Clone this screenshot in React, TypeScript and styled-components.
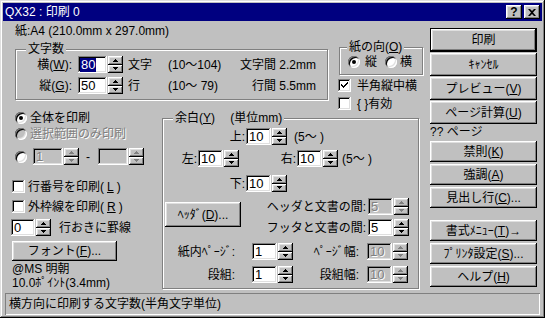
import React from "react";
import styled, { createGlobalStyle, css } from "styled-components";

const GlobalStyle = createGlobalStyle`
  * { box-sizing: border-box; }
  html, body { margin: 0; padding: 0; background: #c0c0c0; }
  body {
    font-family: "Liberation Sans", "Noto Sans CJK JP", sans-serif;
    font-size: 12px;
    line-height: 14px;
    color: #000;
  }
`;

const raised = css`
  background: #c0c0c0;
  box-shadow: inset -1px -1px #000, inset 1px 1px #fff, inset -2px -2px #808080,
    inset 2px 2px #dfdfdf;
`;

const sunken = css`
  box-shadow: inset -1px -1px #fff, inset 1px 1px #808080, inset -2px -2px #dfdfdf,
    inset 2px 2px #000;
`;

const Window = styled.div`
  width: 545px;
  height: 318px;
  padding: 3px;
  background: #c0c0c0;
  box-shadow: inset -1px -1px #000, inset 1px 1px #dfdfdf, inset -2px -2px #808080,
    inset 2px 2px #fff;
  display: flex;
  flex-direction: column;
  overflow: hidden;
`;

const TitleBar = styled.div`
  flex: none;
  height: 18px;
  padding: 0 2px;
  background: #000080;
  color: #fff;
  display: flex;
  align-items: center;
  justify-content: space-between;
`;

const CaptionButtons = styled.div`
  display: flex;
  gap: 2px;
`;

const CaptionButton = styled.span`
  ${raised}
  width: 16px;
  height: 14px;
  display: flex;
  align-items: center;
  justify-content: center;
  color: #000;
  font-weight: bold;
  font-size: 12px;
  line-height: 12px;
`;

const Main = styled.div`
  flex: 1;
  min-height: 0;
  display: flex;
`;

const Form = styled.div`
  width: 427px;
  display: flex;
  flex-direction: column;
`;

const TopArea = styled.div`
  flex: none;
  height: 90px;
  display: flex;
`;

const TopLeft = styled.div`
  width: 325px;
  padding: 3px 0 0 12px;
`;

const TopRight = styled.div`
  margin-left: 10px;
  padding-top: 19px;
`;

const BottomArea = styled.div`
  flex: 1;
  display: flex;
`;

const LeftOptions = styled.div`
  width: 159px;
  padding-left: 9px;
  display: flex;
  flex-direction: column;
`;

const Group = styled.fieldset<{ $w: number; $h: number }>`
  flex: none;
  margin: 0;
  padding: 0;
  min-inline-size: 0;
  width: ${(p) => p.$w}px;
  height: ${(p) => p.$h}px;
  border: 1px solid #808080;
  box-shadow: inset 1px 1px #fff, 1px 1px #fff;
`;

const CountGroup = styled(Group)`
  margin-top: 4px;
`;

const OrientGroup = styled(Group)`
  margin-left: 1px;
`;

const GroupTitle = styled.legend<{ $ml: number }>`
  margin-left: ${(p) => p.$ml}px;
  padding: 0 2px;
  height: 14px;
  line-height: 14px;
  background: #c0c0c0;
  white-space: pre;
`;

const CountGrid = styled.div`
  display: grid;
  grid-template-columns: 62px 45px 45px 69px 79px;
  grid-auto-rows: 17px;
  row-gap: 4px;
  align-items: center;
`;

const Label = styled.span<{ $w: number; $pr?: number }>`
  flex: none;
  width: ${(p) => p.$w}px;
  padding-right: ${(p) => p.$pr ?? 0}px;
  text-align: right;
  white-space: nowrap;
`;

const Unit = styled.span`
  padding-left: 5px;
`;

const Spacing = styled.span`
  text-align: right;
  white-space: nowrap;
`;

const Key = styled.span`
  text-decoration: underline;
`;

const Row = styled.div<{ $mt?: number; $pl?: number; $h?: number }>`
  display: flex;
  align-items: center;
  flex: none;
  height: ${(p) => p.$h ?? 17}px;
  margin-top: ${(p) => p.$mt ?? 0}px;
  padding-left: ${(p) => p.$pl ?? 0}px;
  white-space: nowrap;
`;

const Option = styled.span<{ $gap: number; $ml?: number }>`
  display: inline-flex;
  align-items: center;
  gap: ${(p) => p.$gap}px;
  margin-left: ${(p) => p.$ml ?? 0}px;
`;

const Note = styled.span<{ $ml: number }>`
  margin-left: ${(p) => p.$ml}px;
`;

const Disabled = styled.span`
  color: #808080;
  text-shadow: 1px 1px #fff;
`;

const RadioMark = styled.span<{ $checked?: boolean; $disabled?: boolean }>`
  flex: none;
  width: 12px;
  height: 12px;
  border-radius: 50%;
  background: ${(p) => (p.$disabled ? "#c0c0c0" : "#fff")};
  box-shadow: inset 1px 1px #808080, inset -1px -1px #fff, inset 2px 2px #000,
    inset -2px -2px #dfdfdf;
  display: flex;
  align-items: center;
  justify-content: center;
  &::after {
    content: "";
    width: 4px;
    height: 4px;
    border-radius: 50%;
    background: ${(p) => (p.$checked ? "#000" : "transparent")};
  }
`;

const CheckMark = styled.span`
  flex: none;
  width: 13px;
  height: 13px;
  background: #fff;
  ${sunken}
  display: flex;
  align-items: center;
  justify-content: center;
`;

const Field = styled.span<{ $w: number; $disabled?: boolean }>`
  flex: none;
  width: ${(p) => p.$w}px;
  height: 17px;
  padding-left: 3px;
  background: ${(p) => (p.$disabled ? "#c0c0c0" : "#fff")};
  color: ${(p) => (p.$disabled ? "#808080" : "#000")};
  text-shadow: ${(p) => (p.$disabled ? "1px 1px #fff" : "none")};
  ${sunken}
  display: flex;
  align-items: center;
  font-size: 13px;
`;

const Selection = styled.span`
  margin-left: -1px;
  padding: 0 1px;
  line-height: 14px;
  background: #000080;
  color: #fff;
`;

const SpinWrap = styled.span<{ $ml?: number }>`
  flex: none;
  display: inline-flex;
  gap: 1px;
  margin-left: ${(p) => p.$ml ?? 0}px;
`;

const Spinner = styled.span`
  flex: none;
  width: 15px;
  height: 17px;
  display: flex;
  flex-direction: column;
`;

const SpinHalf = styled.span`
  ${raised}
  flex: 1;
  display: flex;
  align-items: center;
  justify-content: center;
`;

const Dash = styled.span`
  margin: 0 8px 0 7px;
`;

const PushButton = styled.button<{ $h: number; $w?: number; $default?: boolean }>`
  flex: none;
  ${raised}
  border: 0;
  padding: 0;
  font: inherit;
  color: #000;
  width: ${(p) => (p.$w ? `${p.$w}px` : "100%")};
  height: ${(p) => p.$h}px;
  display: flex;
  align-items: center;
  justify-content: center;
  white-space: nowrap;
  ${(p) =>
    p.$default &&
    css`
      box-shadow: inset 0 0 0 1px #000, inset -2px -2px #000, inset 2px 2px #fff,
        inset -3px -3px #808080, inset 3px 3px #dfdfdf;
    `}
`;

const HeaderButton = styled(PushButton)`
  margin: 4px 0 0 2px;
`;

const FontButton = styled(PushButton)`
  margin-top: 5px;
`;

const FontInfo = styled.div`
  margin-top: 1px;
  white-space: nowrap;
`;

const HeaderRow = styled.div`
  display: flex;
  margin-top: 6px;
`;

const Stack = styled.div<{ $gap: number; $mt?: number }>`
  display: flex;
  flex-direction: column;
  gap: ${(p) => p.$gap}px;
  margin-top: ${(p) => p.$mt ?? 0}px;
`;

const Actions = styled.div`
  width: 107px;
  padding-top: 7px;
  display: flex;
  flex-direction: column;
`;

const PageCount = styled.div`
  margin-top: 1px;
  height: 14px;
  white-space: nowrap;
`;

const StatusBar = styled.div`
  flex: none;
  height: 22px;
  margin: 0 2px;
  padding: 0 4px;
  box-shadow: inset 1px 1px #808080, inset -1px -1px #fff;
  display: flex;
  align-items: center;
`;

function Radio({ checked, disabled }: { checked?: boolean; disabled?: boolean }) {
  return <RadioMark $checked={checked} $disabled={disabled} />;
}

function Check({ checked }: { checked?: boolean }) {
  return (
    <CheckMark>
      {checked && (
        <svg width="7" height="7" viewBox="0 0 7 7">
          <path
            d="M6 0h1v2H6v1H5v1H4v1H3v1H2V5H1V4H0V2h1v1h1v1h1V3h1V2h1V1h1z"
            fill="#000"
          />
        </svg>
      )}
    </CheckMark>
  );
}

function Arrow({ down, disabled }: { down?: boolean; disabled?: boolean }) {
  return (
    <svg width="5" height="3" viewBox="0 0 5 3">
      <path
        d={down ? "M0 0h5v1H4v1H3v1H2V2H1V1H0z" : "M2 0h1v1h1v1h1v1H0V2h1V1h1z"}
        fill={disabled ? "#808080" : "#000"}
      />
    </svg>
  );
}

function SpinBox({
  width,
  value,
  disabled,
  selected,
  ml,
}: {
  width: number;
  value: string;
  disabled?: boolean;
  selected?: boolean;
  ml?: number;
}) {
  return (
    <SpinWrap $ml={ml}>
      <Field $w={width} $disabled={disabled}>
        {selected ? <Selection>{value}</Selection> : value}
      </Field>
      <Spinner>
        <SpinHalf>
          <Arrow disabled={disabled} />
        </SpinHalf>
        <SpinHalf>
          <Arrow down disabled={disabled} />
        </SpinHalf>
      </Spinner>
    </SpinWrap>
  );
}

export default function App() {
  return (
    <>
      <GlobalStyle />
      <Window>
        <TitleBar>
          <span>QX32 : 印刷 0</span>
          <CaptionButtons>
            <CaptionButton>?</CaptionButton>
            <CaptionButton>
              <svg width="8" height="7" viewBox="0 0 8 7">
                <path d="M0 0h2l2 2 2-2h2L5 3.5 8 7H6L4 5 2 7H0l3-3.5z" fill="#000" />
              </svg>
            </CaptionButton>
          </CaptionButtons>
        </TitleBar>

        <Main>
          <Form>
            <TopArea>
              <TopLeft>
                <div>紙:A4 (210.0mm x 297.0mm)</div>
                <CountGroup $w={313} $h={58}>
                  <GroupTitle $ml={10}>文字数</GroupTitle>
                  <CountGrid>
                    <Label $w={62} $pr={6}>
                      横(<Key>W</Key>):
                    </Label>
                    <SpinBox width={29} value="80" selected />
                    <Unit>文字</Unit>
                    <span>(10～104)</span>
                    <Spacing>文字間 2.2mm</Spacing>

                    <Label $w={62} $pr={6}>
                      縦(<Key>G</Key>):
                    </Label>
                    <SpinBox width={29} value="50" />
                    <Unit>行</Unit>
                    <span>(10～ 79)</span>
                    <Spacing>行間 5.5mm</Spacing>
                  </CountGrid>
                </CountGroup>
              </TopLeft>

              <TopRight>
                <OrientGroup $w={84} $h={35}>
                  <GroupTitle $ml={7}>
                    紙の向(<Key>O</Key>)
                  </GroupTitle>
                  <Row $h={14} $mt={1} $pl={8}>
                    <Option $gap={5}>
                      <Radio checked />
                      縦
                    </Option>
                    <Option $gap={3} $ml={8}>
                      <Radio />
                      横
                    </Option>
                  </Row>
                </OrientGroup>
                <Row $h={13} $mt={4}>
                  <Option $gap={6}>
                    <Check checked />
                    半角縦中横
                  </Option>
                </Row>
                <Row $h={13} $mt={5}>
                  <Option $gap={6}>
                    <Check />
                    {"{ }有効"}
                  </Option>
                </Row>
              </TopRight>
            </TopArea>

            <BottomArea>
              <LeftOptions>
                <Row $h={14} $pl={3}>
                  <Option $gap={3}>
                    <Radio checked />
                    全体を印刷
                  </Option>
                </Row>
                <Row $h={14} $mt={2} $pl={3}>
                  <Option $gap={3}>
                    <Radio disabled />
                    <Disabled>選択範囲のみ印刷</Disabled>
                  </Option>
                </Row>
                <Row $mt={7} $pl={3}>
                  <Radio />
                  <SpinBox width={30} value="1" disabled ml={6} />
                  <Dash>-</Dash>
                  <SpinBox width={30} value="" disabled />
                </Row>
                <Row $h={13} $mt={15}>
                  <Option $gap={3}>
                    <Check />
                    行番号を印刷(<Key>L</Key>)
                  </Option>
                </Row>
                <Row $h={13} $mt={7}>
                  <Option $gap={3}>
                    <Check />
                    外枠線を印刷(<Key>R</Key>)
                  </Option>
                </Row>
                <Row $mt={6}>
                  <SpinBox width={24} value="0" ml={-1} />
                  <Note $ml={8}>行おきに罫線</Note>
                </Row>
                <FontButton $w={105} $h={20}>
                  フォント(<Key>F</Key>)...
                </FontButton>
                <FontInfo>@MS 明朝</FontInfo>
                <div>10.0ﾎﾟｲﾝﾄ(3.4mm)</div>
              </LeftOptions>

              <Group $w={257} $h={178}>
                <GroupTitle $ml={10}>
                  余白(<Key>Y</Key>)　 (単位mm)
                </GroupTitle>
                <Row $mt={3}>
                  <Label $w={83} $pr={1}>
                    上:
                  </Label>
                  <SpinBox width={25} value="10" />
                  <Note $ml={7}>(5～ )</Note>
                </Row>
                <Row $mt={5}>
                  <Label $w={35} $pr={1}>
                    左:
                  </Label>
                  <SpinBox width={25} value="10" />
                  <Label $w={58} $pr={1}>
                    右:
                  </Label>
                  <SpinBox width={25} value="10" />
                  <Note $ml={4}>(5～ )</Note>
                </Row>
                <Row $mt={8}>
                  <Label $w={83} $pr={1}>
                    下:
                  </Label>
                  <SpinBox width={25} value="10" />
                </Row>
                <HeaderRow>
                  <HeaderButton $w={76} $h={25}>
                    ﾍｯﾀﾞ(<Key>D</Key>)...
                  </HeaderButton>
                  <Stack $gap={4}>
                    <Row>
                      <Label $w={127} $pr={2}>
                        ヘッダと文書の間:
                      </Label>
                      <SpinBox width={25} value="5" disabled />
                    </Row>
                    <Row>
                      <Label $w={127} $pr={2}>
                        フッタと文書の間:
                      </Label>
                      <SpinBox width={25} value="5" />
                    </Row>
                  </Stack>
                </HeaderRow>
                <Row $mt={7}>
                  <Label $w={73} $pr={1}>
                    紙内ﾍﾟｰｼﾞ:
                  </Label>
                  <SpinBox width={25} value="1" ml={16} />
                  <Label $w={74} $pr={8}>
                    ﾍﾟｰｼﾞ幅:
                  </Label>
                  <SpinBox width={25} value="10" disabled />
                </Row>
                <Row $mt={6}>
                  <Label $w={73} $pr={1}>
                    段組:
                  </Label>
                  <SpinBox width={25} value="1" ml={16} />
                  <Label $w={74} $pr={8}>
                    段組幅:
                  </Label>
                  <SpinBox width={25} value="10" disabled />
                </Row>
              </Group>
            </BottomArea>
          </Form>

          <Actions>
            <Stack $gap={1}>
              <PushButton $h={24} $default>
                印刷
              </PushButton>
              <PushButton $h={23}>ｷｬﾝｾﾙ</PushButton>
              <PushButton $h={23}>
                プレビュー(<Key>V</Key>)
              </PushButton>
              <PushButton $h={23}>
                ページ計算(<Key>U</Key>)
              </PushButton>
            </Stack>
            <PageCount>?? ページ</PageCount>
            <Stack $gap={2} $mt={2}>
              <PushButton $h={21}>
                禁則(<Key>K</Key>)
              </PushButton>
              <PushButton $h={21}>
                強調(<Key>A</Key>)
              </PushButton>
              <PushButton $h={21}>
                見出し行(<Key>C</Key>)...
              </PushButton>
            </Stack>
            <Stack $gap={2} $mt={12}>
              <PushButton $h={21}>
                書式ﾒﾆｭｰ(<Key>T</Key>)→
              </PushButton>
              <PushButton $h={21}>
                ﾌﾟﾘﾝﾀ設定(<Key>S</Key>)...
              </PushButton>
              <PushButton $h={21}>
                ヘルプ(<Key>H</Key>)
              </PushButton>
            </Stack>
          </Actions>
        </Main>

        <StatusBar>横方向に印刷する文字数(半角文字単位)</StatusBar>
      </Window>
    </>
  );
}
